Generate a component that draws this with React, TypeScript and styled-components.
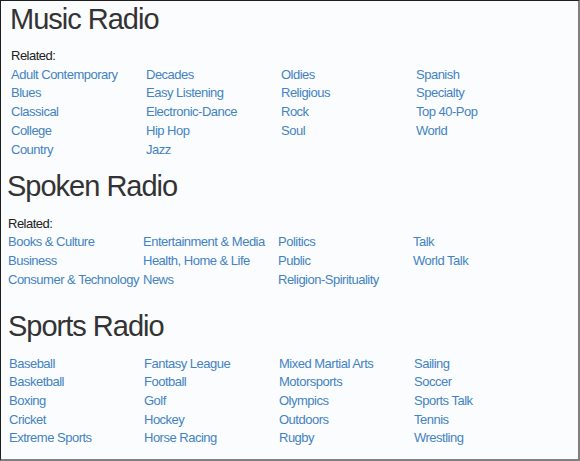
import styled, { createGlobalStyle } from "styled-components";

type Section = {
  title: string;
  related: boolean;
  top: number;
  indent: number;
  columns: string[][];
};

const sections: Section[] = [
  {
    title: "Music Radio",
    related: true,
    top: 1.5,
    indent: 11,
    columns: [
      ["Adult Contemporary", "Blues", "Classical", "College", "Country"],
      ["Decades", "Easy Listening", "Electronic-Dance", "Hip Hop", "Jazz"],
      ["Oldies", "Religious", "Rock", "Soul"],
      ["Spanish", "Specialty", "Top 40-Pop", "World"],
    ],
  },
  {
    title: "Spoken Radio",
    related: true,
    top: 11,
    indent: 8,
    columns: [
      ["Books & Culture", "Business", "Consumer & Technology"],
      ["Entertainment & Media", "Health, Home & Life", "News"],
      ["Politics", "Public", "Religion-Spirituality"],
      ["Talk", "World Talk"],
    ],
  },
  {
    title: "Sports Radio",
    related: false,
    top: 20.5,
    indent: 9,
    columns: [
      ["Baseball", "Basketball", "Boxing", "Cricket", "Extreme Sports"],
      ["Fantasy League", "Football", "Golf", "Hockey", "Horse Racing"],
      ["Mixed Martial Arts", "Motorsports", "Olympics", "Outdoors", "Rugby"],
      ["Sailing", "Soccer", "Sports Talk", "Tennis", "Wrestling"],
    ],
  },
];

const App = () => {
  return (
    <>
      <GlobalStyle />
      <Frame>
        {sections.map((s) => (
          <Block key={s.title} $top={s.top} $indent={s.indent}>
            <Heading>{s.title}</Heading>
            {s.related && <Related>Related:</Related>}
            <Columns>
              {s.columns.map((col, i) => (
                <Column key={i}>
                  {col.map((name) => (
                    <Link key={name} href="#">
                      {name}
                    </Link>
                  ))}
                </Column>
              ))}
            </Columns>
          </Block>
        ))}
      </Frame>
    </>
  );
};

export default App;

const GlobalStyle = createGlobalStyle`
  body {
    margin: 0;
    background: #fbfcfd;
    font-family: "Liberation Sans", Arial, sans-serif;
  }
`;

const Frame = styled.div`
  box-sizing: border-box;
  width: 580px;
  height: 461px;
  overflow: hidden;
  background: #fbfcfd;
  border-top: 1px solid #1e1e1e;
  border-left: 1px solid #1e1e1e;
  border-right: 2px solid #808080;
  border-bottom: 2px solid #808080;
`;

const Block = styled.section<{ $top: number; $indent: number }>`
  margin-top: ${(p) => p.$top}px;
  padding-left: ${(p) => p.$indent - 1}px;
`;

const Heading = styled.h2`
  margin: 0 0 12.5px -1px;
  font-size: 29px;
  font-weight: normal;
  line-height: 32px;
  letter-spacing: -1px;
  color: #333333;
`;

const Related = styled.div`
  font-size: 13px;
  line-height: 18.7px;
  letter-spacing: -0.5px;
  color: #222222;
`;

const Columns = styled.div`
  display: grid;
  grid-template-columns: repeat(4, 135px);
`;

const Column = styled.div`
  display: flex;
  flex-direction: column;
`;

const Link = styled.a`
  font-size: 13px;
  line-height: 18.7px;
  letter-spacing: -0.5px;
  color: #4383c3;
  text-decoration: none;
  white-space: nowrap;
`;
